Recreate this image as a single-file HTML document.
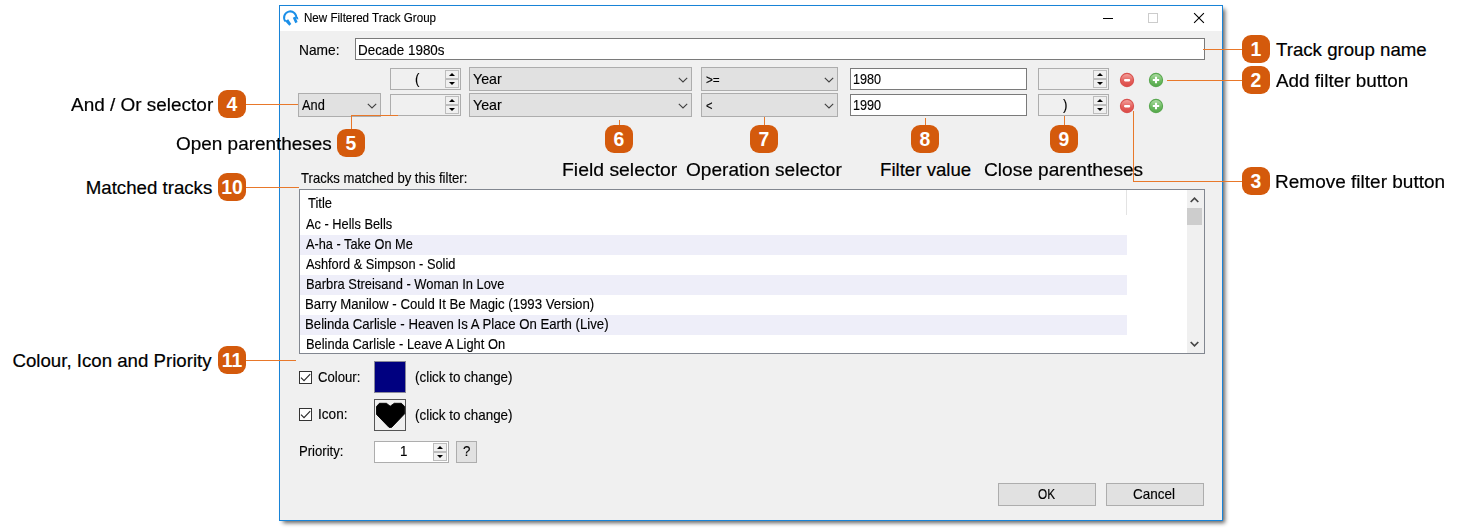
<!DOCTYPE html>
<html><head><meta charset="utf-8"><title>New Filtered Track Group</title>
<style>
html,body{margin:0;padding:0;background:#fff;}
body{width:1461px;height:530px;position:relative;overflow:hidden;font-family:"Liberation Sans",sans-serif;}
.abs{position:absolute;}
svg{display:block;}
#shadow{position:absolute;left:283px;top:9px;width:942px;height:514px;background:rgba(0,0,0,.62);filter:blur(2.2px);}
#win{position:absolute;left:279px;top:5px;width:942px;height:514px;border:1px solid #1883d7;background:#f0f0f0;}
#title{position:absolute;left:0;top:0;width:942px;height:25px;background:#fff;}
.ui{font-size:14.4px;color:#000;white-space:nowrap;position:absolute;line-height:16px;transform-origin:0 50%;-webkit-text-stroke:0.15px #000;}
.inp{position:absolute;background:#fff;border:1px solid #7a7a7a;box-sizing:border-box;}
.cmb{position:absolute;background:#e1e1e1;border:1px solid #adadad;box-sizing:border-box;}
.btn{position:absolute;background:#e1e1e1;border:1px solid #adadad;box-sizing:border-box;}
.spn{position:absolute;border:1px solid #c4c4c4;box-sizing:border-box;}
.sbtn{position:absolute;width:14px;height:9px;border:1px solid #bdbdbd;background:#f0f0f0;box-sizing:border-box;}
.tbl{position:absolute;background:#fff;border:1px solid #828790;box-sizing:border-box;}
.lbl{transform-origin:0 50%;-webkit-text-stroke:0.2px #000;position:absolute;font-size:18.67px;line-height:22px;color:#000;white-space:nowrap;}
.bdg{position:absolute;width:28px;height:28px;border-radius:9px;background:#d45a0c;color:#fff;font-weight:bold;font-size:19.4px;line-height:29px;text-align:center;}
.ln{position:absolute;background:#e8782a;}
</style></head><body>
<div id="shadow"></div><div id="win"><div id="title"></div></div>
<svg class="abs" style="left:282px;top:9px" width="18" height="18" viewBox="0 0 18 18">
<path d="M3.5 12.4 A6.1 6.1 0 1 1 14.2 9.6" fill="none" stroke="#1b8fe8" stroke-width="2"/>
<path d="M3.0 11.9 L6.2 10.2 L9.3 15.1 L7.3 16.8 Z" fill="#1b8fe8"/>
<path d="M10.8 8.8 L13.3 7.5 L15.6 13.1 L13.3 14.3 Z" fill="#1b8fe8"/>
<path d="M14.6 7.6 L15.9 8.2 L16.4 10.4 L15.2 10.2 Z" fill="#1b8fe8"/>
</svg>
<div class="ui" style="left:303.86px;top:10.10px;font-size:12.4px;transform:scaleX(0.9353);">New Filtered Track Group</div>
<div class="abs" style="left:1103px;top:18px;width:10px;height:1px;background:#000"></div>
<div class="abs" style="left:1148px;top:13px;width:8px;height:8px;border:1px solid #ccc"></div>
<svg class="abs" style="left:1193px;top:12px" width="12" height="12" viewBox="0 0 12 12"><path d="M1.1 1.1 L10.9 10.9 M10.9 1.1 L1.1 10.9" stroke="#000" stroke-width="1.1" fill="none"/></svg>
<div class="ui" style="left:298.74px;top:42.01px;transform:scaleX(0.9558);">Name:</div>
<div class="inp" style="left:355px;top:38px;width:850px;height:22px;"></div>
<div class="ui" style="left:357.87px;top:42.01px;transform:scaleX(0.9322);">Decade 1980s</div>
<div class="spn" style="left:390px;top:68px;width:71px;height:22px;background:#f0f0f0;border-color:#adadad"></div>
<div class="sbtn" style="left:445px;top:70px"></div><div class="sbtn" style="left:445px;top:79px"></div>
<svg class="abs" style="left:448.5px;top:73px" width="6" height="3" viewBox="0 0 6 3"><path d="M0 3 L3 0 L6 3 Z" fill="#000"/></svg>
<svg class="abs" style="left:448.5px;top:82px" width="6" height="3" viewBox="0 0 6 3"><path d="M0 0 L3 3 L6 0 Z" fill="#000"/></svg>
<div class="ui" style="left:414.68px;top:71.41px;transform:scaleX(0.9280);">(</div>
<div class="cmb" style="left:469px;top:67px;width:223px;height:24px"></div>
<svg class="abs" style="left:678px;top:77px" width="10" height="6" viewBox="0 0 10 6"><path d="M0.8 0.8 L5 5 L9.2 0.8" fill="none" stroke="#404040" stroke-width="1.1"/></svg>
<div class="ui" style="left:473.00px;top:71.41px;transform:scaleX(0.9903);">Year</div>
<div class="cmb" style="left:701px;top:67px;width:137px;height:24px"></div>
<svg class="abs" style="left:824px;top:77px" width="10" height="6" viewBox="0 0 10 6"><path d="M0.8 0.8 L5 5 L9.2 0.8" fill="none" stroke="#404040" stroke-width="1.1"/></svg>
<div class="ui" style="left:705.60px;top:71.63px;font-size:12.6px;transform:scaleX(0.9335);">&gt;=</div>
<div class="inp" style="left:850px;top:68px;width:177px;height:22px;"></div>
<div class="ui" style="left:852.92px;top:71.41px;transform:scaleX(0.8771);">1980</div>
<div class="spn" style="left:1038px;top:68px;width:71px;height:22px;background:#f0f0f0;border-color:#adadad"></div>
<div class="sbtn" style="left:1093px;top:70px"></div><div class="sbtn" style="left:1093px;top:79px"></div>
<svg class="abs" style="left:1096.5px;top:73px" width="6" height="3" viewBox="0 0 6 3"><path d="M0 3 L3 0 L6 3 Z" fill="#000"/></svg>
<svg class="abs" style="left:1096.5px;top:82px" width="6" height="3" viewBox="0 0 6 3"><path d="M0 0 L3 3 L6 0 Z" fill="#000"/></svg>
<div class="cmb" style="left:298px;top:93px;width:83px;height:24px"></div>
<svg class="abs" style="left:367px;top:103px" width="10" height="6" viewBox="0 0 10 6"><path d="M0.8 0.8 L5 5 L9.2 0.8" fill="none" stroke="#404040" stroke-width="1.1"/></svg>
<div class="ui" style="left:302.20px;top:97.41px;transform:scaleX(0.8906);">And</div>
<div class="spn" style="left:390px;top:94px;width:71px;height:22px;background:#f0f0f0;border-color:#adadad"></div>
<div class="sbtn" style="left:445px;top:96px"></div><div class="sbtn" style="left:445px;top:105px"></div>
<svg class="abs" style="left:448.5px;top:99px" width="6" height="3" viewBox="0 0 6 3"><path d="M0 3 L3 0 L6 3 Z" fill="#000"/></svg>
<svg class="abs" style="left:448.5px;top:108px" width="6" height="3" viewBox="0 0 6 3"><path d="M0 0 L3 3 L6 0 Z" fill="#000"/></svg>
<div class="cmb" style="left:469px;top:93px;width:223px;height:24px"></div>
<svg class="abs" style="left:678px;top:103px" width="10" height="6" viewBox="0 0 10 6"><path d="M0.8 0.8 L5 5 L9.2 0.8" fill="none" stroke="#404040" stroke-width="1.1"/></svg>
<div class="ui" style="left:473.00px;top:97.41px;transform:scaleX(0.9903);">Year</div>
<div class="cmb" style="left:701px;top:93px;width:137px;height:24px"></div>
<svg class="abs" style="left:824px;top:103px" width="10" height="6" viewBox="0 0 10 6"><path d="M0.8 0.8 L5 5 L9.2 0.8" fill="none" stroke="#404040" stroke-width="1.1"/></svg>
<div class="ui" style="left:705.80px;top:97.63px;font-size:12.6px;transform:scaleX(0.8857);">&lt;</div>
<div class="inp" style="left:850px;top:94px;width:177px;height:22px;"></div>
<div class="ui" style="left:852.92px;top:97.41px;transform:scaleX(0.8771);">1990</div>
<div class="spn" style="left:1038px;top:94px;width:71px;height:22px;background:#f0f0f0;border-color:#adadad"></div>
<div class="sbtn" style="left:1093px;top:96px"></div><div class="sbtn" style="left:1093px;top:105px"></div>
<svg class="abs" style="left:1096.5px;top:99px" width="6" height="3" viewBox="0 0 6 3"><path d="M0 3 L3 0 L6 3 Z" fill="#000"/></svg>
<svg class="abs" style="left:1096.5px;top:108px" width="6" height="3" viewBox="0 0 6 3"><path d="M0 0 L3 3 L6 0 Z" fill="#000"/></svg>
<div class="ui" style="left:1062.54px;top:97.01px;transform:scaleX(0.9280);">)</div>
<svg class="abs" style="left:1119px;top:72px" width="16" height="16" viewBox="0 0 16 16"><defs><linearGradient id="rg112780" x1="0" y1="0" x2="0" y2="1"><stop offset="0" stop-color="#f4a7a2"/><stop offset="0.55" stop-color="#e4605c"/><stop offset="1" stop-color="#dc4a47"/></linearGradient></defs><circle cx="8" cy="8" r="6.6" fill="url(#rg112780)" stroke="#d9524f" stroke-width="1.1"/><rect x="5" y="6.9" width="6.2" height="2.5" rx="1.1" fill="#fff"/></svg>
<svg class="abs" style="left:1148px;top:72px" width="16" height="16" viewBox="0 0 16 16"><defs><linearGradient id="gg115680" x1="0" y1="0" x2="0" y2="1"><stop offset="0" stop-color="#b4dfaa"/><stop offset="0.55" stop-color="#6dbb62"/><stop offset="1" stop-color="#55a84a"/></linearGradient></defs><circle cx="8" cy="8" r="6.6" fill="url(#gg115680)" stroke="#5aa850" stroke-width="1.1"/><path d="M8 4.8 V11.2 M4.8 8 H11.2" stroke="#fff" stroke-width="2.1"/></svg>
<svg class="abs" style="left:1119px;top:98px" width="16" height="16" viewBox="0 0 16 16"><defs><linearGradient id="rg1127106" x1="0" y1="0" x2="0" y2="1"><stop offset="0" stop-color="#f4a7a2"/><stop offset="0.55" stop-color="#e4605c"/><stop offset="1" stop-color="#dc4a47"/></linearGradient></defs><circle cx="8" cy="8" r="6.6" fill="url(#rg1127106)" stroke="#d9524f" stroke-width="1.1"/><rect x="5" y="6.9" width="6.2" height="2.5" rx="1.1" fill="#fff"/></svg>
<svg class="abs" style="left:1148px;top:98px" width="16" height="16" viewBox="0 0 16 16"><defs><linearGradient id="gg1156106" x1="0" y1="0" x2="0" y2="1"><stop offset="0" stop-color="#b4dfaa"/><stop offset="0.55" stop-color="#6dbb62"/><stop offset="1" stop-color="#55a84a"/></linearGradient></defs><circle cx="8" cy="8" r="6.6" fill="url(#gg1156106)" stroke="#5aa850" stroke-width="1.1"/><path d="M8 4.8 V11.2 M4.8 8 H11.2" stroke="#fff" stroke-width="2.1"/></svg>
<div class="ui" style="left:300.75px;top:170.01px;transform:scaleX(0.9108);">Tracks matched by this filter:</div>
<div class="tbl" style="left:299px;top:189px;width:906px;height:165px;"></div>
<div class="abs" style="left:300px;top:235px;width:827px;height:20px;background:#eeeef9"></div>
<div class="abs" style="left:300px;top:275px;width:827px;height:20px;background:#eeeef9"></div>
<div class="abs" style="left:300px;top:315px;width:827px;height:20px;background:#eeeef9"></div>
<div class="abs" style="left:1126px;top:190px;width:1px;height:25px;background:#e3e3e3"></div>
<div class="abs" style="left:1187px;top:190px;width:17px;height:163px;background:#f0f0f0"></div>
<div class="abs" style="left:1187px;top:208px;width:15px;height:17px;background:#cdcdcd"></div>
<svg class="abs" style="left:1190px;top:197px" width="9" height="6" viewBox="0 0 9 6"><path d="M0.7 5 L4.5 1.2 L8.3 5" fill="none" stroke="#454545" stroke-width="1.7"/></svg>
<svg class="abs" style="left:1190px;top:341px" width="9" height="6" viewBox="0 0 9 6"><path d="M0.7 1 L4.5 4.8 L8.3 1" fill="none" stroke="#454545" stroke-width="1.7"/></svg>
<div class="ui" style="left:308.40px;top:195.01px;transform:scaleX(0.9006);">Title</div>
<div class="ui" style="left:306.05px;top:215.76px;transform:scaleX(0.8911);">Ac - Hells Bells</div>
<div class="ui" style="left:306.05px;top:235.76px;transform:scaleX(0.8856);">A-ha - Take On Me</div>
<div class="ui" style="left:306.00px;top:255.76px;transform:scaleX(0.8895);">Ashford &amp; Simpson - Solid</div>
<div class="ui" style="left:305.50px;top:275.76px;transform:scaleX(0.8970);">Barbra Streisand - Woman In Love</div>
<div class="ui" style="left:305.48px;top:295.76px;transform:scaleX(0.9176);">Barry Manilow - Could It Be Magic (1993 Version)</div>
<div class="ui" style="left:305.48px;top:315.76px;transform:scaleX(0.9168);">Belinda Carlisle - Heaven Is A Place On Earth (Live)</div>
<div class="ui" style="left:305.50px;top:335.76px;transform:scaleX(0.8952);">Belinda Carlisle - Leave A Light On</div>
<div class="abs" style="left:299px;top:371px;width:13px;height:13px"><svg width="13" height="13" viewBox="0 0 13 13"><rect x="0.5" y="0.5" width="12" height="12" fill="#fff" stroke="#333"/><path d="M2 6.7 L5 9.7 L11.2 3.1" fill="none" stroke="#2a2a2a" stroke-width="1.15"/></svg></div>
<div class="abs" style="left:299px;top:408px;width:13px;height:13px"><svg width="13" height="13" viewBox="0 0 13 13"><rect x="0.5" y="0.5" width="12" height="12" fill="#fff" stroke="#333"/><path d="M2 6.7 L5 9.7 L11.2 3.1" fill="none" stroke="#2a2a2a" stroke-width="1.15"/></svg></div>
<div class="ui" style="left:318.20px;top:369.01px;transform:scaleX(0.9121);">Colour:</div>
<div class="ui" style="left:317.95px;top:406.41px;transform:scaleX(0.9452);">Icon:</div>
<div class="abs" style="left:374px;top:361px;width:32px;height:32px;box-sizing:border-box;border:1px solid #8a8a9a;background:#000080"></div>
<div class="abs" style="left:374px;top:399px;width:32px;height:32px;box-sizing:border-box;border:1px solid #555;background:#f0f0f0"></div>
<svg class="abs" style="left:374px;top:399px" width="32" height="32" viewBox="0 0 32 32"><path d="M5.4 4.3 L12.4 4.3 L16.2 7.2 L20.3 4.3 L27.4 4.3 L30.7 7.6 L30.7 14.7 L17.6 28.4 L15.1 28.4 L2.5 15.4 L2.5 7.5 Z" fill="#000" stroke="#000" stroke-width="0.9" stroke-linejoin="round"/></svg>
<div class="ui" style="left:415.20px;top:368.61px;transform:scaleX(0.9309);">(click to change)</div>
<div class="ui" style="left:415.20px;top:406.61px;transform:scaleX(0.9309);">(click to change)</div>
<div class="ui" style="left:298.69px;top:442.61px;transform:scaleX(0.9108);">Priority:</div>
<div class="spn" style="left:374px;top:441px;width:75px;height:22px;background:#fff;border-color:#adadad"></div>
<div class="sbtn" style="left:433px;top:443px"></div><div class="sbtn" style="left:433px;top:452px"></div>
<svg class="abs" style="left:436.5px;top:446px" width="6" height="3" viewBox="0 0 6 3"><path d="M0 3 L3 0 L6 3 Z" fill="#000"/></svg>
<svg class="abs" style="left:436.5px;top:455px" width="6" height="3" viewBox="0 0 6 3"><path d="M0 0 L3 3 L6 0 Z" fill="#000"/></svg>
<div class="ui" style="left:400.02px;top:442.61px;transform:scaleX(0.9280);">1</div>
<div class="btn" style="left:456px;top:441px;width:21px;height:22px;"></div>
<div class="ui" style="left:462.79px;top:443.01px;transform:scaleX(0.9280);">?</div>
<div class="btn" style="left:998px;top:483px;width:98px;height:23px;"></div>
<div class="ui" style="left:1037.60px;top:486.01px;transform:scaleX(0.8210);">OK</div>
<div class="btn" style="left:1106px;top:483px;width:98px;height:23px;"></div>
<div class="ui" style="left:1133.20px;top:486.01px;transform:scaleX(0.9373);">Cancel</div>
<div class="ln" style="left:1203px;top:49px;width:39px;height:1px"></div>
<div class="bdg" style="left:1242px;top:35px">1</div>
<div class="lbl" style="left:1276.00px;top:39.03px;">Track group name</div>
<div class="ln" style="left:1167px;top:80px;width:75px;height:1px"></div>
<div class="bdg" style="left:1242px;top:66px">2</div>
<div class="lbl" style="left:1275.60px;top:70.03px;transform:scaleX(1.0115);">Add filter button</div>
<div class="ln" style="left:1133px;top:111px;width:1px;height:71px"></div>
<div class="ln" style="left:1133px;top:181px;width:109px;height:1px"></div>
<div class="bdg" style="left:1242px;top:167px">3</div>
<div class="lbl" style="left:1274.98px;top:171.23px;transform:scaleX(1.0189);">Remove filter button</div>
<div class="ln" style="left:246px;top:104px;width:52px;height:1px"></div>
<div class="bdg" style="left:218px;top:90px">4</div>
<div class="lbl" style="left:70.50px;top:94.13px;transform:scaleX(1.0160);">And / Or selector</div>
<div class="ln" style="left:351px;top:115px;width:1px;height:14px"></div>
<div class="ln" style="left:351px;top:115px;width:47px;height:1px"></div>
<div class="bdg" style="left:337px;top:129px">5</div>
<div class="lbl" style="left:175.70px;top:133.03px;transform:scaleX(1.0152);">Open parentheses</div>
<div class="ln" style="left:619px;top:120px;width:1px;height:5px"></div>
<div class="bdg" style="left:605px;top:125px">6</div>
<div class="lbl" style="left:561.96px;top:159.03px;transform:scaleX(1.0389);">Field selector</div>
<div class="ln" style="left:764px;top:117px;width:1px;height:8px"></div>
<div class="bdg" style="left:750px;top:125px">7</div>
<div class="lbl" style="left:686.40px;top:159.03px;transform:scaleX(1.0222);">Operation selector</div>
<div class="ln" style="left:925px;top:118px;width:1px;height:7px"></div>
<div class="bdg" style="left:911px;top:125px">8</div>
<div class="lbl" style="left:880.01px;top:159.03px;">Filter value</div>
<div class="ln" style="left:1064px;top:116px;width:1px;height:9px"></div>
<div class="bdg" style="left:1050px;top:125px">9</div>
<div class="lbl" style="left:984.40px;top:159.03px;transform:scaleX(1.0230);">Close parentheses</div>
<div class="ln" style="left:246px;top:187px;width:53px;height:1px"></div>
<div class="bdg" style="left:218px;top:173px">10</div>
<div class="lbl" style="left:85.75px;top:177.13px;">Matched tracks</div>
<div class="ln" style="left:246px;top:360px;width:50px;height:1px"></div>
<div class="bdg" style="left:218px;top:346px">11</div>
<div class="lbl" style="left:12.50px;top:350.13px;">Colour, Icon and Priority</div>
</body></html>
